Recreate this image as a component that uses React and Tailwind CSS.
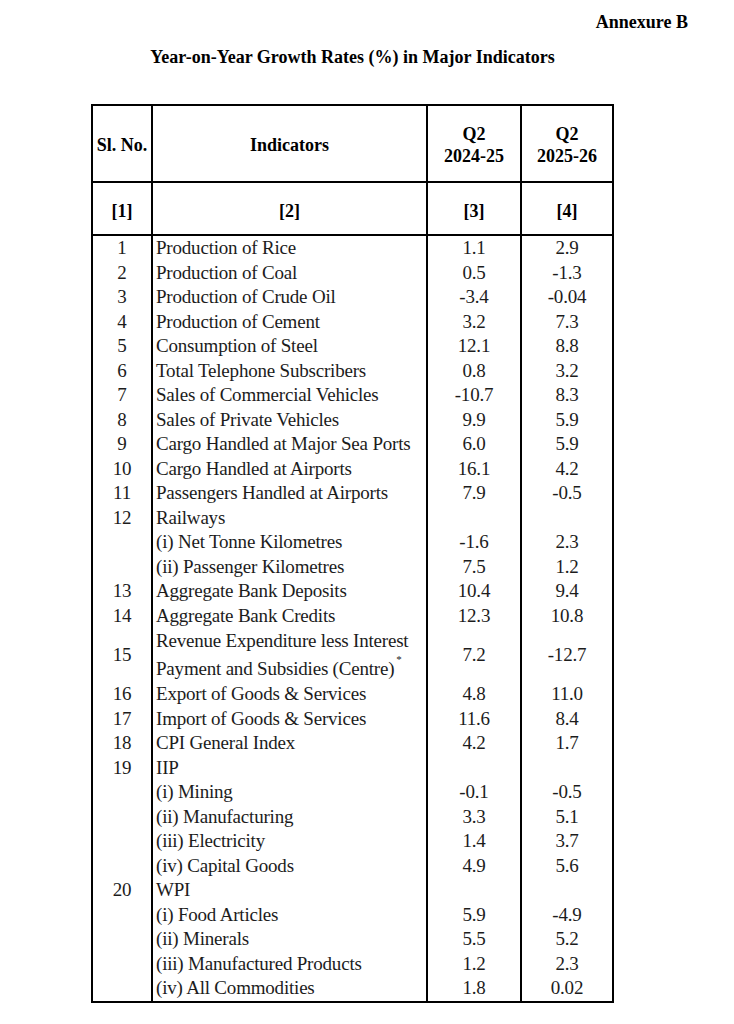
import React from 'react';

const rows = [
  { no: '1', name: 'Production of Rice', a: '1.1', b: '2.9' },
  { no: '2', name: 'Production of Coal', a: '0.5', b: '-1.3' },
  { no: '3', name: 'Production of Crude Oil', a: '-3.4', b: '-0.04' },
  { no: '4', name: 'Production of Cement', a: '3.2', b: '7.3' },
  { no: '5', name: 'Consumption of Steel', a: '12.1', b: '8.8' },
  { no: '6', name: 'Total Telephone Subscribers', a: '0.8', b: '3.2' },
  { no: '7', name: 'Sales of Commercial Vehicles', a: '-10.7', b: '8.3' },
  { no: '8', name: 'Sales of Private Vehicles', a: '9.9', b: '5.9' },
  { no: '9', name: 'Cargo Handled at Major Sea Ports', a: '6.0', b: '5.9' },
  { no: '10', name: 'Cargo Handled at Airports', a: '16.1', b: '4.2' },
  { no: '11', name: 'Passengers Handled at Airports', a: '7.9', b: '-0.5' },
  { no: '12', name: 'Railways', a: '', b: '' },
  { no: '', name: '(i) Net Tonne Kilometres', a: '-1.6', b: '2.3' },
  { no: '', name: '(ii) Passenger Kilometres', a: '7.5', b: '1.2' },
  { no: '13', name: 'Aggregate Bank Deposits', a: '10.4', b: '9.4' },
  { no: '14', name: 'Aggregate Bank Credits', a: '12.3', b: '10.8' },
  { no: '15', tall: true, a: '7.2', b: '-12.7' },
  { no: '16', name: 'Export of Goods & Services', a: '4.8', b: '11.0' },
  { no: '17', name: 'Import of Goods & Services', a: '11.6', b: '8.4' },
  { no: '18', name: 'CPI General Index', a: '4.2', b: '1.7' },
  { no: '19', name: 'IIP', a: '', b: '' },
  { no: '', name: '(i) Mining', a: '-0.1', b: '-0.5' },
  { no: '', name: '(ii) Manufacturing', a: '3.3', b: '5.1' },
  { no: '', name: '(iii) Electricity', a: '1.4', b: '3.7' },
  { no: '', name: '(iv) Capital Goods', a: '4.9', b: '5.6' },
  { no: '20', name: 'WPI', a: '', b: '' },
  { no: '', name: '(i) Food Articles', a: '5.9', b: '-4.9' },
  { no: '', name: '(ii) Minerals', a: '5.5', b: '5.2' },
  { no: '', name: '(iii) Manufactured Products', a: '1.2', b: '2.3' },
  { no: '', name: '(iv) All Commodities', a: '1.8', b: '0.02' },
];

const Row = ({ r }) => {
  const h = r.tall ? 'h-[54px]' : 'h-[24.5px]';
  return (
    <div className={`flex ${h} items-center text-[19px] tracking-[-0.2px] leading-[24.5px] text-[#1c1c1c]`}>
      <div className="w-[60px] h-full border-r-2 border-black flex items-center justify-center">{r.no}</div>
      <div className="w-[275px] h-full border-r-2 border-black flex items-center pl-[3px] whitespace-nowrap">
        {r.tall ? (
          <div className="leading-[28px]">
            <div>Revenue Expenditure less Interest</div>
            <div className="flex items-start">
              <span>Payment and Subsidies (Centre)</span>
              <span className="text-[11px] leading-[11px] ml-[2px] -mt-[1px]">*</span>
            </div>
          </div>
        ) : (
          r.name
        )}
      </div>
      <div className="w-[94px] h-full border-r-2 border-black flex items-center justify-center">{r.a}</div>
      <div className="flex-1 h-full flex items-center justify-center">{r.b}</div>
    </div>
  );
};

const App = () => {
  return (
    <div className="bg-white min-h-screen w-[734px] pt-[10px] font-['Liberation_Serif','Times_New_Roman',serif]">
      <div className="h-[24px] leading-[24px] text-right pr-[46px] text-[18px] font-bold text-black">Annexure B</div>
      <div className="mt-[11px] ml-[91px] w-[523px] h-[24px] leading-[24px] text-center text-[18px] font-bold text-black">
        Year-on-Year Growth Rates (%) in Major Indicators
      </div>

      <div className="mt-[35px] ml-[91px] w-[523px] border-2 border-black">
        {/* header */}
        <div className="flex h-[77px] border-b-2 border-black text-[18px] font-bold text-black">
          <div className="w-[60px] border-r-2 border-black flex items-center justify-center whitespace-nowrap pt-[3px]">Sl. No.</div>
          <div className="w-[275px] border-r-2 border-black flex items-center justify-center pt-[3px]">Indicators</div>
          <div className="w-[94px] border-r-2 border-black flex flex-col items-center justify-center leading-[22px] pt-[3px]">
            <span>Q2</span>
            <span>2024-25</span>
          </div>
          <div className="flex-1 flex flex-col items-center justify-center leading-[22px] pt-[3px]">
            <span>Q2</span>
            <span>2025-26</span>
          </div>
        </div>
        <div className="flex h-[53px] border-b-2 border-black text-[18px] font-bold text-black">
          <div className="w-[60px] border-r-2 border-black flex items-center justify-center pt-[6px]">[1]</div>
          <div className="w-[275px] border-r-2 border-black flex items-center justify-center pt-[6px]">[2]</div>
          <div className="w-[94px] border-r-2 border-black flex items-center justify-center pt-[6px]">[3]</div>
          <div className="flex-1 flex items-center justify-center pt-[6px]">[4]</div>
        </div>

        {rows.map((r, i) => (
          <Row key={i} r={r} />
        ))}
      </div>
    </div>
  );
};

export default App;
